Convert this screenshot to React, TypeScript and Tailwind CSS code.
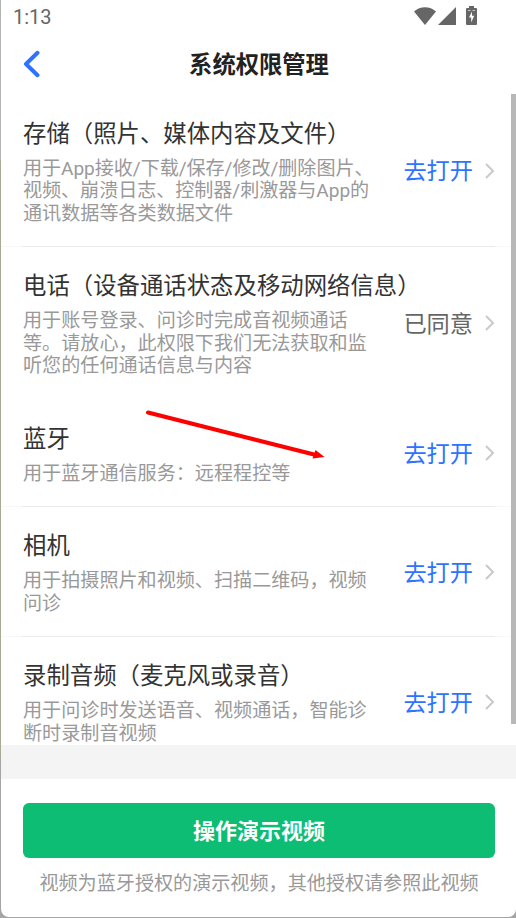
type Permission = {
  title: string
  lines: string[]
  granted?: boolean
  divider?: boolean
}

const permissions: Permission[] = [
  {
    title: '存储（照片、媒体内容及文件）',
    lines: ['用于App接收/下载/保存/修改/删除图片、', '视频、崩溃日志、控制器/刺激器与App的', '通讯数据等各类数据文件'],
    divider: true,
  },
  {
    title: '电话（设备通话状态及移动网络信息）',
    lines: ['用于账号登录、问诊时完成音视频通话', '等。请放心，此权限下我们无法获取和监', '听您的任何通话信息与内容'],
    granted: true,
  },
  {
    title: '蓝牙',
    lines: ['用于蓝牙通信服务：远程程控等'],
    divider: true,
  },
  {
    title: '相机',
    lines: ['用于拍摄照片和视频、扫描二维码，视频', '问诊'],
    divider: true,
  },
  {
    title: '录制音频（麦克风或录音）',
    lines: ['用于问诊时发送语音、视频通话，智能诊', '断时录制音视频'],
  },
]

function StatusBar() {
  return (
    <div className="flex h-[34px] shrink-0 items-center justify-between pl-3 pr-[39px] text-[#666]">
      <span className="text-[20px] leading-none">1:13</span>
      <div className="mb-[3px] flex items-center">
        <svg width="22" height="18" viewBox="0 0 22 18" fill="currentColor">
          <path d="M0 4.5C6-1.3 16-1.3 22 4.5L11 18Z" />
        </svg>
        <svg className="ml-0.5" width="18" height="18" viewBox="0 0 18 18" fill="currentColor">
          <path d="M18 0v18H0Z" />
        </svg>
        <svg className="ml-2.5" width="11" height="19" viewBox="0 0 11 19" fill="currentColor">
          <path d="M3 0h5v2h2q1 0 1 1v15q0 1-1 1H1q-1 0-1-1V3q0-1 1-1h2Z" />
          <path d="M2 4.5h2.5M6.5 4.5h2.5" stroke="#ddd" strokeWidth="0.8" />
          <path d="M6 5.5L3 11.5h2.2V16.5L8.2 9.8H6Z" fill="#fff" />
        </svg>
      </div>
    </div>
  )
}

function PermissionRow({ title, lines, granted, divider }: Permission) {
  return (
    <div className="relative flex shrink-0 items-center pb-[21.5px] pl-[22px] pr-[21px] pt-[22.75px]">
      <div className="min-w-0 flex-1">
        <h2 className="whitespace-nowrap text-[23.4px] leading-[34px] text-[#333]">{title}</h2>
        <div className="mt-[6.75px] text-[19.1px] leading-[22.5px] text-[#999]">
          {lines.map((line) => (
            <p key={line} className={line.includes('/') ? 'whitespace-nowrap tracking-[-0.06px]' : 'whitespace-nowrap'}>
              {line}
            </p>
          ))}
        </div>
      </div>
      <span className={granted ? 'pt-0.5 text-[23.2px] text-[#666]' : 'pt-0.5 text-[23.2px] text-[#2d73ff]'}>
        {granted ? '已同意' : '去打开'}
      </span>
      <svg className="ml-3 shrink-0" width="10" height="16" viewBox="0 0 10 16" fill="none" stroke="#c8c9cc" strokeWidth="2">
        <path d="M1 1l7 7-7 7" />
      </svg>
      {divider && (
        <div className="absolute inset-x-0 bottom-0 h-px bg-[#f7f7f7] px-[21px]">
          <div className="h-px bg-[#ebebec]" />
        </div>
      )}
    </div>
  )
}

export default function App() {
  return (
    <div className="h-[918px] w-[516px] overflow-hidden bg-[linear-gradient(#b4b4b4_160px,#a5ab97_161px,#a5ab97_758px,#a5a5a5_759px)] pb-px pl-px font-[Roboto,'Noto_Sans_CJK_SC',sans-serif]">
      <div className="relative flex h-full flex-col overflow-hidden rounded-b-lg bg-white">
        <StatusBar />
        <header className="flex h-[60px] shrink-0 items-center">
          <svg className="ml-[22px]" width="18" height="28" viewBox="0 0 18 28" fill="none" stroke="#2d73ff" strokeWidth="4" strokeLinecap="round" strokeLinejoin="round">
            <path d="M14.5 2.8L3 14l11.5 11.2" />
          </svg>
          <h1 className="flex-1 pr-[39px] pt-0.5 text-center text-[23.3px] font-bold text-[#222]">系统权限管理</h1>
        </header>

        {/* Scrollable list, the last row is cut by the footer */}
        <main className="flex h-[651px] shrink-0 flex-col overflow-hidden">
          {permissions.map((item) => (
            <PermissionRow key={item.title} {...item} />
          ))}
        </main>
        <div className="h-[34px] shrink-0 bg-[#f4f4f4]" />

        <footer className="flex flex-col items-center px-[22px] pt-6">
          <button className="h-[55px] w-[472px] rounded-md bg-[#0dbd74] pl-px pt-0.5 text-[22px] font-bold text-white">操作演示视频</button>
          <p className="mt-3 whitespace-nowrap pl-px text-[19.1px] leading-[27px] text-[#999]">
            视频为蓝牙授权的演示视频，其他授权请参照此视频
          </p>
        </footer>

        {/* Scrollbar */}
        <div className="absolute right-0 top-[94px] h-[630px] w-[5px] bg-[#b8b8b8]" />

        {/* Arrow pointing at the bluetooth action */}
        <svg className="absolute left-[144px] top-[408px]" width="184" height="54" viewBox="145 408 184 54">
          <path d="M148 412.5L316 455" stroke="#f00" strokeWidth="4" strokeLinecap="round" />
          <path d="M315.5 450L324.5 457L312.5 458.5Z" fill="#f00" />
        </svg>
      </div>
    </div>
  )
}
